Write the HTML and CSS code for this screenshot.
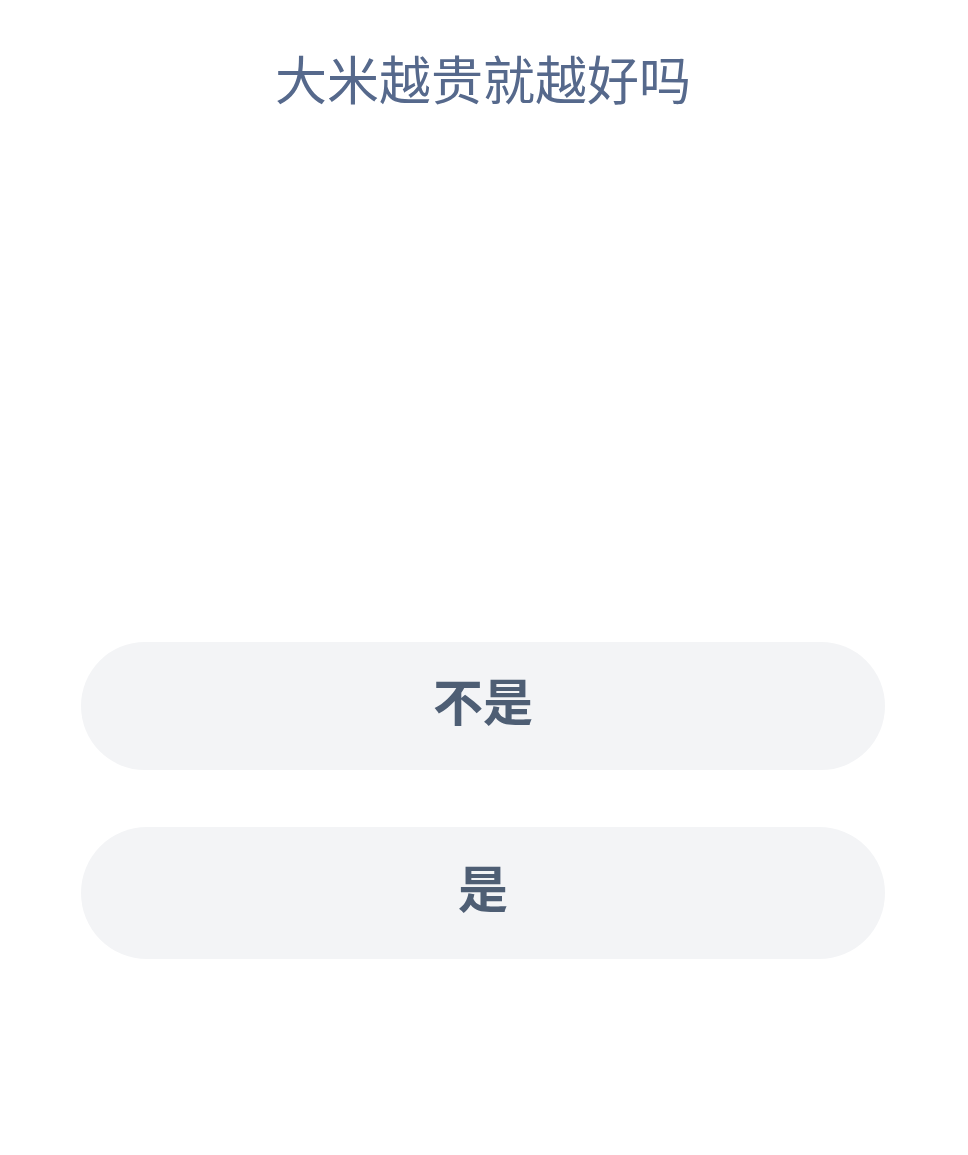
FILE: index.html
```html
<!DOCTYPE html>
<html lang="zh-CN">
<head>
<meta charset="utf-8">
<title>大米越贵就越好吗</title>
<link rel="stylesheet" href="styles.css">
</head>
<body>
<main class="quiz">
  <h1 class="quiz-title">大米越贵就越好吗</h1>
  <div class="quiz-options">
    <button class="option" type="button">不是</button>
    <button class="option option-tall" type="button">是</button>
  </div>
</main>
</body>
</html>
```
FILE: styles.css
```css
html, body {
  margin: 0;
  padding: 0;
  background: #ffffff;
}

body {
  font-family: "Noto Sans CJK SC", "Noto Sans", sans-serif;
}

.quiz {
  display: flex;
  flex-direction: column;
  align-items: center;
  padding: 0 83px 0 81px;
}

.quiz-title {
  margin: 43px 0 0;
  font-size: 52px;
  font-weight: 400;
  line-height: 70px;
  color: #56698c;
  letter-spacing: 0;
}

.quiz-options {
  align-self: stretch;
  display: flex;
  flex-direction: column;
  gap: 57px;
  margin-top: 529px;
}

.option {
  display: flex;
  align-items: center;
  justify-content: center;
  height: 128px;
  border: 0;
  border-radius: 999px;
  background: #f3f4f6;
  color: #4e5e74;
  font-family: inherit;
  font-size: 50px;
  font-weight: 700;
  padding: 0 0 14px;
}

.option-tall {
  height: 132px;
}
```
